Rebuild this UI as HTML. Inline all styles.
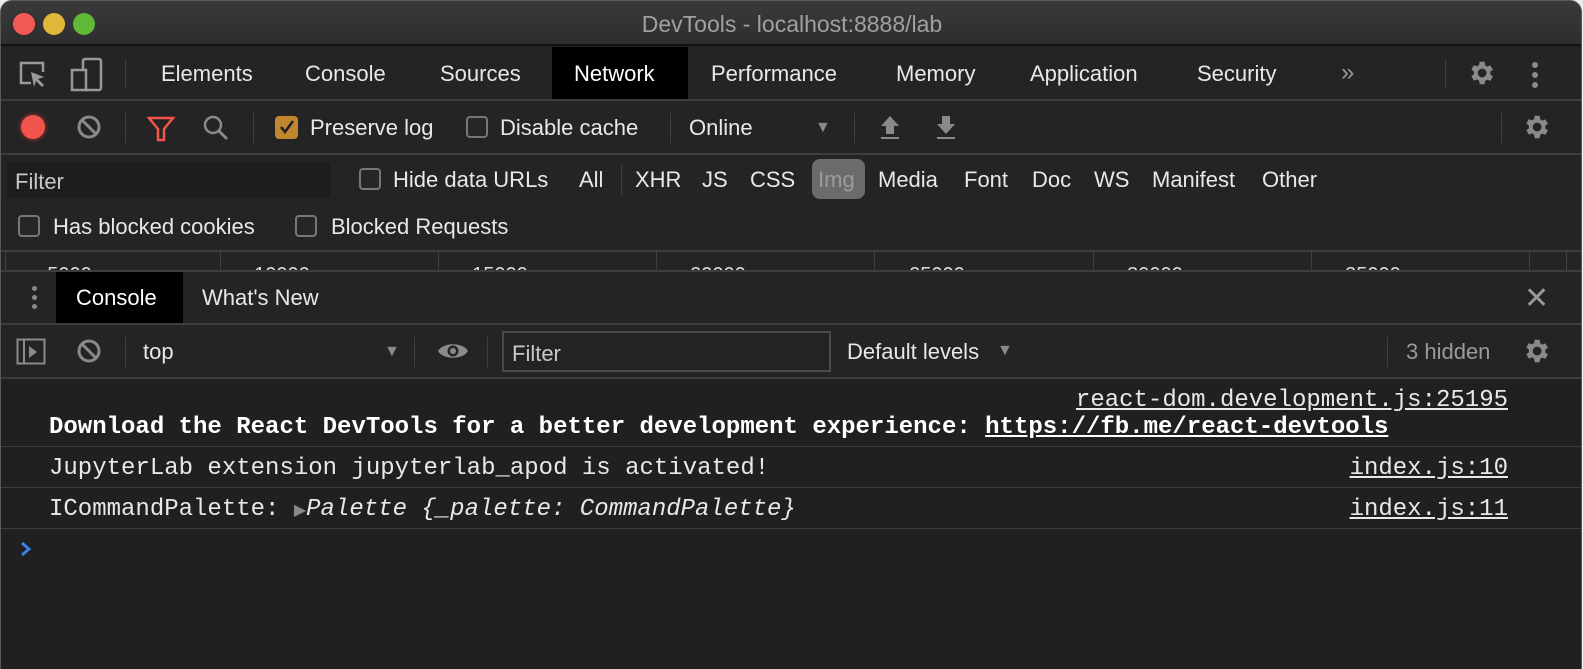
<!DOCTYPE html>
<html><head><meta charset="utf-8"><style>
*{margin:0;padding:0;box-sizing:border-box}
body{width:1583px;height:669px;background:#ececec;overflow:hidden;font-family:"Liberation Sans",sans-serif;color:#e8e8e8;position:relative}
.win{position:absolute;left:0;top:0;width:1582px;height:669px;background:#242424;border-radius:12px 12px 0 0;overflow:hidden;border:1px solid #5a5a5a;border-bottom:none}
.a{position:absolute;white-space:nowrap}
.t{font-size:22px;top:0}
.hl{position:absolute;left:0;right:0;height:2px;background:#3d3d3d}
.vs{position:absolute;width:1px;background:#3f3f3f}
.cb{position:absolute;width:22px;height:22px;border:2px solid #777;border-radius:4px;background:#262626}
.mono{font-family:"Liberation Mono",monospace;font-size:24px}
.u{text-decoration:underline}
</style></head><body>
<div class="win">
 <div class="a" style="left:0;top:0;width:1582px;height:45px;background:linear-gradient(#3a3a3a,#2e2e2e);border-bottom:2px solid #111"></div>
 <div class="a" style="left:12px;top:12px;width:22px;height:22px;border-radius:50%;background:#f05a52"></div>
 <div class="a" style="left:42px;top:12px;width:22px;height:22px;border-radius:50%;background:#e0b73a"></div>
 <div class="a" style="left:72px;top:12px;width:22px;height:22px;border-radius:50%;background:#5fb936"></div>
 <div class="a" style="left:0;width:1582px;top:10px;text-align:center;font-size:23px;color:#a0a0a0">DevTools - localhost:8888/lab</div>

 <div class="a" style="left:0;top:46px;width:1582px;height:53px;background:#242424"></div>
 <svg class="a" style="left:16px;top:58px" width="34" height="34" viewBox="0 0 34 34"><path d="M14 24H4V4h22v9" fill="none" stroke="#999" stroke-width="2.5"/><path d="M14 13l13 5-6 2 6 6-2 2-6-6-2 6z" fill="#999"/></svg>
 <svg class="a" style="left:68px;top:56px" width="36" height="36" viewBox="0 0 36 36"><rect x="14" y="2" width="18" height="31" rx="2" fill="none" stroke="#999" stroke-width="2.5"/><rect x="3" y="13" width="14" height="20" fill="#242424" stroke="#999" stroke-width="2.5"/></svg>
 <div class="vs" style="left:124px;top:58px;height:30px"></div>
 <div class="a" style="left:551px;top:46px;width:136px;height:53px;background:#000"></div>
 <div class="a t" style="left:160px;top:60px">Elements</div>
 <div class="a t" style="left:304px;top:60px">Console</div>
 <div class="a t" style="left:439px;top:60px">Sources</div>
 <div class="a t" style="left:573px;top:60px;color:#fff">Network</div>
 <div class="a t" style="left:710px;top:60px">Performance</div>
 <div class="a t" style="left:895px;top:60px">Memory</div>
 <div class="a t" style="left:1029px;top:60px">Application</div>
 <div class="a t" style="left:1196px;top:60px">Security</div>
 <div class="a t" style="left:1340px;top:58px;color:#999;font-size:24px">»</div>
 <div class="vs" style="left:1444px;top:58px;height:30px"></div>
 <svg class="a" style="left:1465px;top:57px" width="30" height="30" viewBox="0 0 24 24"><path fill="#8a8a8a" d="M19.4 13a7.5 7.5 0 0 0 0-2l2.1-1.6-2-3.5-2.5 1a7.3 7.3 0 0 0-1.7-1L14.9 3h-4l-.4 2.7a7.3 7.3 0 0 0-1.7 1l-2.5-1-2 3.5L6.4 11a7.5 7.5 0 0 0 0 2l-2.1 1.6 2 3.5 2.5-1a7.3 7.3 0 0 0 1.7 1l.4 2.9h4l.4-2.7a7.3 7.3 0 0 0 1.7-1l2.5 1 2-3.5zM12.9 15.5a3.5 3.5 0 1 1 0-7 3.5 3.5 0 0 1 0 7z"/></svg>
 <div class="a" style="left:1531px;top:61px;width:6px;height:6px;border-radius:50%;background:#8a8a8a"></div>
 <div class="a" style="left:1531px;top:71px;width:6px;height:6px;border-radius:50%;background:#8a8a8a"></div>
 <div class="a" style="left:1531px;top:81px;width:6px;height:6px;border-radius:50%;background:#8a8a8a"></div>
 <div class="hl" style="top:98px"></div>

 <div class="a" style="left:20px;top:114px;width:24px;height:24px;border-radius:50%;background:#f0544c;box-shadow:0 0 6px #a33"></div>
 <svg class="a" style="left:75px;top:113px" width="26" height="26" viewBox="0 0 26 26"><circle cx="13" cy="13" r="10" fill="none" stroke="#8a8a8a" stroke-width="3"/><path d="M6 6l14 14" stroke="#8a8a8a" stroke-width="3"/></svg>
 <div class="vs" style="left:124px;top:112px;height:30px"></div>
 <svg class="a" style="left:145px;top:114px" width="30" height="28" viewBox="0 0 30 28"><path d="M3 3h24l-9 11v11h-6V14z" fill="none" stroke="#f0544c" stroke-width="2.5"/></svg>
 <svg class="a" style="left:200px;top:112px" width="30" height="30" viewBox="0 0 30 30"><circle cx="12" cy="12" r="8" fill="none" stroke="#8a8a8a" stroke-width="2.5"/><path d="M18 18l8 8" stroke="#8a8a8a" stroke-width="2.8"/></svg>
 <div class="vs" style="left:252px;top:112px;height:30px"></div>
 <div class="a" style="left:274px;top:115px;width:23px;height:23px;border-radius:4px;background:#c2862e"></div>
 <svg class="a" style="left:277px;top:117px" width="18" height="18" viewBox="0 0 18 18"><path d="M3 9l4 5 8-11" fill="none" stroke="#222" stroke-width="2.6"/></svg>
 <div class="a t" style="left:309px;top:114px">Preserve log</div>
 <div class="cb" style="left:465px;top:115px"></div>
 <div class="a t" style="left:499px;top:114px">Disable cache</div>
 <div class="vs" style="left:669px;top:112px;height:30px"></div>
 <div class="a t" style="left:688px;top:114px">Online</div>
 <div class="a" style="left:814px;top:118px;font-size:16px;color:#8a8a8a">▼</div>
 <div class="vs" style="left:853px;top:112px;height:30px"></div>
 <svg class="a" style="left:876px;top:112px" width="26" height="28" viewBox="0 0 26 28"><path d="M13 3l9 10h-5v8H9v-8H4z" fill="#8a8a8a"/><rect x="4" y="24" width="18" height="2" fill="#8a8a8a"/></svg>
 <svg class="a" style="left:932px;top:112px" width="26" height="28" viewBox="0 0 26 28"><path d="M9 3h8v8h5l-9 10L4 11h5z" fill="#8a8a8a"/><rect x="4" y="24" width="18" height="2" fill="#8a8a8a"/></svg>
 <div class="vs" style="left:1500px;top:112px;height:30px"></div>
 <svg class="a" style="left:1520px;top:111px" width="30" height="30" viewBox="0 0 24 24"><path fill="#8a8a8a" d="M19.4 13a7.5 7.5 0 0 0 0-2l2.1-1.6-2-3.5-2.5 1a7.3 7.3 0 0 0-1.7-1L14.9 3h-4l-.4 2.7a7.3 7.3 0 0 0-1.7 1l-2.5-1-2 3.5L6.4 11a7.5 7.5 0 0 0 0 2l-2.1 1.6 2 3.5 2.5-1a7.3 7.3 0 0 0 1.7 1l.4 2.9h4l.4-2.7a7.3 7.3 0 0 0 1.7-1l2.5 1 2-3.5zM12.9 15.5a3.5 3.5 0 1 1 0-7 3.5 3.5 0 0 1 0 7z"/></svg>
 <div class="hl" style="top:152px"></div>

 <div class="a" style="left:6px;top:161px;width:324px;height:36px;background:#1d1d1d"></div>
 <div class="a t" style="left:14px;top:168px;color:#c8c8c8">Filter</div>
 <div class="cb" style="left:358px;top:167px"></div>
 <div class="a t" style="left:392px;top:166px">Hide data URLs</div>
 <div class="a t" style="left:578px;top:166px">All</div>
 <div class="vs" style="left:620px;top:164px;height:30px"></div>
 <div class="a t" style="left:634px;top:166px">XHR</div>
 <div class="a t" style="left:701px;top:166px">JS</div>
 <div class="a t" style="left:749px;top:166px">CSS</div>
 <div class="a" style="left:811px;top:158px;width:53px;height:40px;border-radius:8px;background:#6b6b6b"></div>
 <div class="a t" style="left:817px;top:166px;color:#9a9a9a">Img</div>
 <div class="a t" style="left:877px;top:166px">Media</div>
 <div class="a t" style="left:963px;top:166px">Font</div>
 <div class="a t" style="left:1031px;top:166px">Doc</div>
 <div class="a t" style="left:1093px;top:166px">WS</div>
 <div class="a t" style="left:1151px;top:166px">Manifest</div>
 <div class="a t" style="left:1261px;top:166px">Other</div>
 <div class="cb" style="left:17px;top:214px"></div>
 <div class="a t" style="left:52px;top:213px">Has blocked cookies</div>
 <div class="cb" style="left:294px;top:214px"></div>
 <div class="a t" style="left:330px;top:213px">Blocked Requests</div>
 <div class="hl" style="top:249px"></div>

 <div class="a" style="left:4px;top:251px;width:1562px;height:19px;overflow:hidden;border-left:1px solid #444;border-right:1px solid #444">
  <div class="a" style="left:0;top:12px;width:1560px;font-size:20px;color:#ddd">
   <span class="a" style="right:1442px">5000 ms</span><span class="a" style="right:1224px">10000 ms</span><span class="a" style="right:1006px">15000 ms</span><span class="a" style="right:788px">20000 ms</span><span class="a" style="right:569px">25000 ms</span><span class="a" style="right:351px">30000 ms</span><span class="a" style="right:133px">35000 ms</span>
  </div>
  <div class="vs" style="left:214px;top:0;height:19px"></div><div class="vs" style="left:432px;top:0;height:19px"></div><div class="vs" style="left:650px;top:0;height:19px"></div><div class="vs" style="left:868px;top:0;height:19px"></div><div class="vs" style="left:1087px;top:0;height:19px"></div><div class="vs" style="left:1305px;top:0;height:19px"></div><div class="vs" style="left:1523px;top:0;height:19px"></div>
 </div>
 <div class="hl" style="top:269px"></div>

 <div class="a" style="left:31px;top:285px;width:5px;height:5px;border-radius:50%;background:#8a8a8a"></div>
 <div class="a" style="left:31px;top:294px;width:5px;height:5px;border-radius:50%;background:#8a8a8a"></div>
 <div class="a" style="left:31px;top:303px;width:5px;height:5px;border-radius:50%;background:#8a8a8a"></div>
 <div class="a" style="left:55px;top:271px;width:127px;height:51px;background:#000"></div>
 <div class="a t" style="left:75px;top:284px;color:#fff">Console</div>
 <div class="a t" style="left:201px;top:284px">What's New</div>
 <div class="a" style="left:1523px;top:280px;font-size:30px;color:#999">✕</div>
 <div class="hl" style="top:322px"></div>

 <svg class="a" style="left:15px;top:337px" width="30" height="28" viewBox="0 0 30 28"><rect x="1.5" y="1.5" width="27" height="24" fill="none" stroke="#8a8a8a" stroke-width="2"/><path d="M8 2v24" stroke="#8a8a8a" stroke-width="2"/><path d="M13 8l8 6-8 6z" fill="#8a8a8a"/></svg>
 <svg class="a" style="left:75px;top:337px" width="26" height="26" viewBox="0 0 26 26"><circle cx="13" cy="13" r="10" fill="none" stroke="#8a8a8a" stroke-width="3"/><path d="M6 6l14 14" stroke="#8a8a8a" stroke-width="3"/></svg>
 <div class="vs" style="left:124px;top:336px;height:30px"></div>
 <div class="a t" style="left:142px;top:338px">top</div>
 <div class="a" style="left:383px;top:342px;font-size:16px;color:#8a8a8a">▼</div>
 <div class="vs" style="left:413px;top:336px;height:30px"></div>
 <svg class="a" style="left:436px;top:337px" width="32" height="26" viewBox="0 0 32 26"><path d="M1 13C6 4 26 4 31 13 26 22 6 22 1 13z" fill="#8a8a8a"/><circle cx="16" cy="13" r="5.5" fill="#242424"/><circle cx="16" cy="13" r="3" fill="#8a8a8a"/></svg>
 <div class="vs" style="left:486px;top:336px;height:30px"></div>
 <div class="a" style="left:501px;top:330px;width:329px;height:41px;border:2px solid #4a4a4a;background:#232323"></div>
 <div class="a t" style="left:511px;top:340px;color:#c8c8c8">Filter</div>
 <div class="a t" style="left:846px;top:338px">Default levels</div>
 <div class="a" style="left:996px;top:341px;font-size:16px;color:#8a8a8a">▼</div>
 <div class="vs" style="left:1386px;top:336px;height:30px"></div>
 <div class="a t" style="left:1405px;top:338px;color:#9a9a9a">3 hidden</div>
 <svg class="a" style="left:1520px;top:335px" width="30" height="30" viewBox="0 0 24 24"><path fill="#8a8a8a" d="M19.4 13a7.5 7.5 0 0 0 0-2l2.1-1.6-2-3.5-2.5 1a7.3 7.3 0 0 0-1.7-1L14.9 3h-4l-.4 2.7a7.3 7.3 0 0 0-1.7 1l-2.5-1-2 3.5L6.4 11a7.5 7.5 0 0 0 0 2l-2.1 1.6 2 3.5 2.5-1a7.3 7.3 0 0 0 1.7 1l.4 2.9h4l.4-2.7a7.3 7.3 0 0 0 1.7-1l2.5 1 2-3.5zM12.9 15.5a3.5 3.5 0 1 1 0-7 3.5 3.5 0 0 1 0 7z"/></svg>
 <div class="hl" style="top:376px"></div>

 <div class="a" style="left:0;top:378px;width:1582px;height:291px;background:#202020"></div>
 <div class="a mono u" style="right:73px;top:386px">react-dom.development.js:25195</div>
 <div class="a mono" style="left:48px;top:413px;font-weight:bold;color:#fff">Download the React DevTools for a better development experience: <span class="u">https://fb.me/react-devtools</span></div>
 <div class="hl" style="top:445px;height:1px"></div>
 <div class="a mono" style="left:48px;top:454px">JupyterLab extension jupyterlab_apod is activated!</div>
 <div class="a mono u" style="right:73px;top:454px">index.js:10</div>
 <div class="hl" style="top:486px;height:1px"></div>
 <div class="a mono" style="left:48px;top:495px">ICommandPalette: <span style="color:#888;font-size:16px;font-family:'DejaVu Sans'">▶</span><i>Palette {_palette: CommandPalette}</i></div>
 <div class="a mono u" style="right:73px;top:495px">index.js:11</div>
 <div class="hl" style="top:527px;height:1px"></div>
 <svg class="a" style="left:18px;top:540px" width="14" height="16" viewBox="0 0 14 16"><path d="M3 2l7 6-7 6" fill="none" stroke="#3b82f0" stroke-width="2.8"/></svg>
</div>
</body></html>
